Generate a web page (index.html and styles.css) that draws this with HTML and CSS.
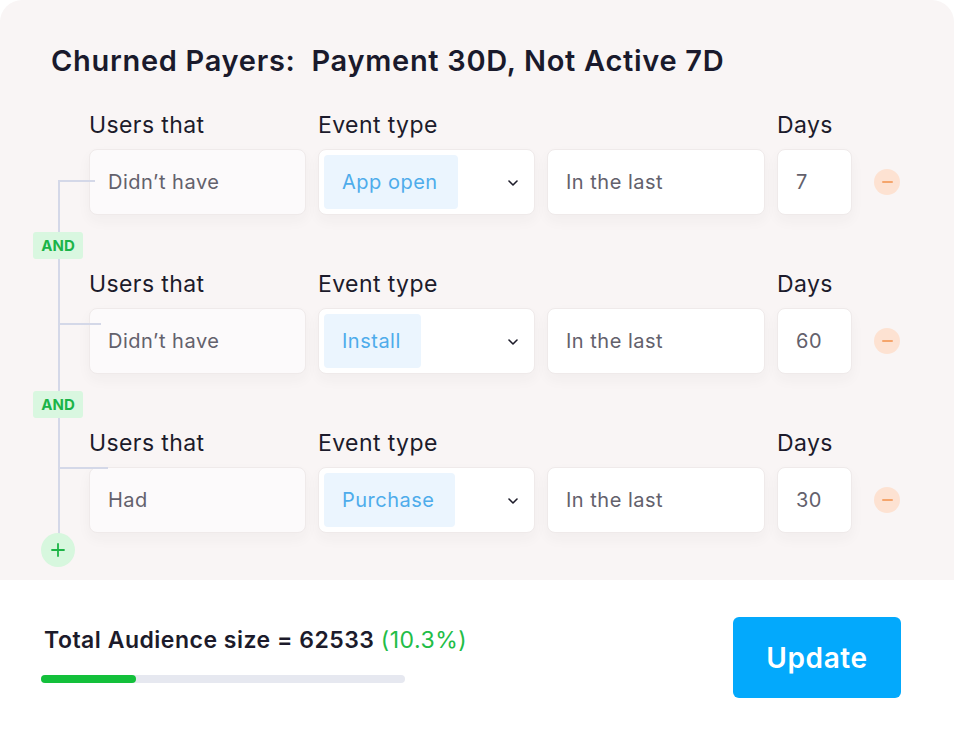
FILE: index.html
```html
<!DOCTYPE html>
<html lang="en">
<head>
<meta charset="utf-8">
<title>Churned Payers</title>
<link rel="stylesheet" href="styles.css">
</head>
<body>
<main class="page">
  <section class="card">
    <h1 class="title">Churned Payers:&nbsp; Payment 30D, Not Active 7D</h1>
    <div class="rules">
      <div class="group">
        <div class="label">Users that</div>
        <div class="label">Event type</div>
        <div class="label"></div>
        <div class="label">Days</div>
        <div class="label"></div>
        <div class="field field-soft branch branch-mid">Didn’t have</div>
        <div class="field field-select"><span class="chip">App open</span><svg class="chev" width="10" height="6" viewBox="0 0 10 6"><path d="M1 1l4 4 4-4" fill="none" stroke="#1d1c2a" stroke-width="1.6" stroke-linecap="round" stroke-linejoin="round"/></svg></div>
        <div class="field">In the last</div>
        <div class="field">7</div>
        <button class="minus" aria-label="Remove"></button>
      </div>
      <div class="and"><span>AND</span></div>
      <div class="group">
        <div class="label">Users that</div>
        <div class="label">Event type</div>
        <div class="label"></div>
        <div class="label">Days</div>
        <div class="label"></div>
        <div class="field field-soft branch branch-upper">Didn’t have</div>
        <div class="field field-select"><span class="chip">Install</span><svg class="chev" width="10" height="6" viewBox="0 0 10 6"><path d="M1 1l4 4 4-4" fill="none" stroke="#1d1c2a" stroke-width="1.6" stroke-linecap="round" stroke-linejoin="round"/></svg></div>
        <div class="field">In the last</div>
        <div class="field">60</div>
        <button class="minus" aria-label="Remove"></button>
      </div>
      <div class="and"><span>AND</span></div>
      <div class="group">
        <div class="label">Users that</div>
        <div class="label">Event type</div>
        <div class="label"></div>
        <div class="label">Days</div>
        <div class="label"></div>
        <div class="field field-soft branch branch-top">Had</div>
        <div class="field field-select"><span class="chip">Purchase</span><svg class="chev" width="10" height="6" viewBox="0 0 10 6"><path d="M1 1l4 4 4-4" fill="none" stroke="#1d1c2a" stroke-width="1.6" stroke-linecap="round" stroke-linejoin="round"/></svg></div>
        <div class="field">In the last</div>
        <div class="field">30</div>
        <button class="minus" aria-label="Remove"></button>
      </div>
      <div class="add-row">
        <button class="plus" aria-label="Add"><svg width="14" height="14" viewBox="0 0 14 14"><path d="M7 1v12M1 7h12" stroke="#1cb446" stroke-width="1.8" stroke-linecap="round"/></svg></button>
      </div>
    </div>
  </section>
  <section class="footer">
    <div class="summary">
      <p class="total">Total Audience size = 62533 <span class="pct">(10.3%)</span></p>
      <div class="bar"><div class="bar-fill" style="width: 26%"></div></div>
    </div>
    <button class="update">Update</button>
  </section>
</main>
</body>
</html>
```
FILE: styles.css
```css
* { box-sizing: border-box; }
html, body { margin: 0; padding: 0; background: #ffffff; }
body {
  font-family: "Inter", "Noto Sans", sans-serif;
  color: #1c1b2b;
}
.page { width: 954px; }

.card {
  background: #f9f5f5;
  border-radius: 22px 22px 0 0;
  height: 580px;
  padding: 43px 0 0 33px;
}
.title {
  margin: 0 0 31px 18px;
  font-size: 29px;
  line-height: 36px;
  font-weight: 600;
  color: #1a1a2c;
  letter-spacing: 0.7px;
}

.rules {
  position: relative;
}
.rules::before {
  content: "";
  position: absolute;
  left: 25px;
  top: 70px;
  bottom: 17px;
  width: 1.5px;
  background: #d4d8e8;
}

.group {
  display: grid;
  grid-template-columns: 217px 217px 218px 75px 26px;
  grid-template-rows: 30px 66px;
  column-gap: 12px;
  row-gap: 9px;
  margin-left: 56px;
  align-items: center;
}
.label {
  font-size: 23px;
  line-height: 30px;
  color: #1c1b2b;
  font-weight: 400;
  letter-spacing: 0.4px;
}
.field {
  height: 66px;
  background: #ffffff;
  border: 1px solid #efeaea;
  border-radius: 8px;
  box-shadow: 0 6px 14px rgba(60, 40, 40, 0.04);
  display: flex;
  align-items: center;
  padding: 0 18px;
  font-size: 20px;
  letter-spacing: 0.5px;
  color: #63616c;
  position: relative;
}
.field-soft { background: #fcfafb; }
.field-select {
  padding: 5px 16px 5px 5px;
  justify-content: space-between;
  align-items: stretch;
}
.chip {
  background: #ebf5fe;
  color: #4eaceb;
  border-radius: 4px;
  display: flex;
  align-items: center;
  padding: 0 20px 0 18px;
  font-size: 20px;
}
.chev { align-self: center; margin-top: 2px; }

.branch::before {
  content: "";
  position: absolute;
  left: -32px;
  height: 1.5px;
  background: #d4d8e8;
}
.branch-mid::before { top: 30px; width: 37px; }
.branch-upper::before { top: 14px; width: 43px; }
.branch-top::before { top: -1px; width: 50px; }

.minus {
  width: 26px;
  height: 26px;
  border-radius: 50%;
  border: 0;
  padding: 0;
  background: #fde2d2;
  margin-left: 10px;
  display: flex;
  align-items: center;
  justify-content: center;
}
.minus::after {
  content: "";
  width: 11px;
  height: 2px;
  border-radius: 1px;
  background: #f5a56c;
}

.and {
  margin: 17px 0 10px;
  height: 27px;
  display: flex;
}
.and span {
  position: relative;
  width: 50px;
  height: 27px;
  background: #d9f7e0;
  border-radius: 3px;
  color: #1bb448;
  font-weight: 700;
  font-size: 15px;
  display: flex;
  align-items: center;
  justify-content: center;
}

.add-row { display: flex; padding-left: 8px; }
.plus {
  position: relative;
  width: 34px;
  height: 34px;
  border-radius: 50%;
  border: 0;
  padding: 0;
  background: #d7f7de;
  display: flex;
  align-items: center;
  justify-content: center;
}

.footer {
  height: 155px;
  display: flex;
  justify-content: space-between;
  align-items: flex-start;
  padding: 37px 53px 0 41px;
}
.summary { padding-top: 8px; }
.total {
  margin: 0 0 20px 3px;
  font-size: 23px;
  line-height: 30px;
  font-weight: 600;
  letter-spacing: 0.5px;
  color: #1c1b2b;
}
.pct { color: #22bd47; font-weight: 400; }
.bar {
  width: 364px;
  height: 8px;
  border-radius: 4px;
  background: #e6e8f0;
}
.bar-fill {
  height: 8px;
  border-radius: 4px;
  background: #13c03b;
}
.update {
  width: 168px;
  height: 81px;
  border: 0;
  border-radius: 6px;
  background: #03a9fc;
  color: #ffffff;
  font-family: "Inter", "Noto Sans", sans-serif;
  font-size: 28px;
  font-weight: 600;
  letter-spacing: 0.6px;
}
```
